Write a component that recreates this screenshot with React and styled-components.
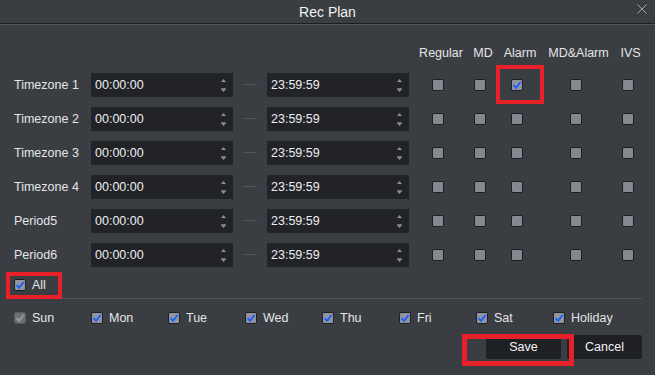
import React from 'react'
import styled, { createGlobalStyle } from 'styled-components'

const GlobalStyle = createGlobalStyle`
  html, body {
    margin: 0;
    padding: 0;
    background: #3a3d42;
  }
  body {
    font-family: 'Liberation Sans', Arial, sans-serif;
    color: #e4e5e7;
  }
`

const zones = ['Timezone 1', 'Timezone 2', 'Timezone 3', 'Timezone 4', 'Period5', 'Period6']
const kinds = ['Regular', 'MD', 'Alarm', 'MD&Alarm', 'IVS']
const days = ['Sun', 'Mon', 'Tue', 'Wed', 'Thu', 'Fri', 'Sat', 'Holiday']

function Check({ checked, disabled }) {
  return (
    <Box checked={checked} disabled={disabled}>
      {checked && (
        <svg width="10" height="10" viewBox="0 0 10 10">
          <path d="M1.6 5.2 L4 7.8 L8.6 2" fill="none" stroke={disabled ? '#9a9ca1' : '#1a5cff'} strokeWidth="1.8" />
        </svg>
      )}
    </Box>
  )
}

function Spinner() {
  return (
    <Arrows width="7" height="24" viewBox="0 0 7 24">
      <path d="M1 9 L3.5 6 L6 9 Z" fill="#8d9096" />
      <path d="M1 16 L3.5 19 L6 16 Z" fill="#8d9096" />
      <path d="M1 15.5 H6" stroke="#6b6e73" strokeWidth="1" />
    </Arrows>
  )
}

function RecPlan() {
  return (
    <Dialog>
      <TitleBar>
        <span />
        <Title>Rec Plan</Title>
        <Close>
          <svg width="10" height="10" viewBox="0 0 10 10">
            <path d="M0.5 0.5 L9.5 9.5 M9.5 0.5 L0.5 9.5" stroke="#a3a6ab" strokeWidth="1" />
          </svg>
        </Close>
      </TitleBar>
      <Body>
        <Table>
          <span />
          <span />
          <span />
          <span />
          {kinds.map((k) => (
            <Head key={k}>{k}</Head>
          ))}
          {zones.map((z, i) => (
            <React.Fragment key={z}>
              <Label>{z}</Label>
              <TimeField>
                00:00:00
                <Spinner />
              </TimeField>
              <Dash />
              <TimeField>
                23:59:59
                <Spinner />
              </TimeField>
              {kinds.map((k) => (
                <Cell key={k}>
                  {i === 0 && k === 'Alarm' ? (
                    <Marked>
                      <Check checked />
                      <Highlight l={-15} r={-21} t={-14} b={-13} w={4} />
                    </Marked>
                  ) : (
                    <Check />
                  )}
                </Cell>
              ))}
            </React.Fragment>
          ))}
        </Table>
        <AllRow>
          <Marked>
            <Option>
              <Check checked />
              All
            </Option>
            <Highlight l={-8} r={-16} t={-6} b={-7} w={4} />
          </Marked>
        </AllRow>
        <Divider />
        <Days>
          {days.map((d, i) => (
            <Option key={d}>
              <Check checked disabled={i === 0} />
              {d}
            </Option>
          ))}
        </Days>
        <Actions>
          <Marked>
            <Button>Save</Button>
            <Highlight l={-24} r={-13} t={-1} b={-7} w={5} />
          </Marked>
          <Button>Cancel</Button>
        </Actions>
      </Body>
    </Dialog>
  )
}

export default function App() {
  return (
    <>
      <GlobalStyle />
      <RecPlan />
    </>
  )
}

const Dialog = styled.div`
  width: 655px;
  height: 375px;
  background: #3a3d42;
  overflow: hidden;
`

const TitleBar = styled.div`
  height: 23px;
  display: grid;
  grid-template-columns: 1fr auto 1fr;
  align-items: center;
  background: #3a3d42;
  border-bottom: 1px solid #1c1e21;
  box-shadow: 0 1px 0 #52565c;
`

const Title = styled.div`
  font-size: 14px;
  color: #f2f3f4;
  padding-top: 1px;
`

const Close = styled.div`
  justify-self: end;
  display: flex;
  padding: 0 8px 6px 0;
`

const Body = styled.div`
  padding: 19px 13px 0 14px;
`

const Table = styled.div`
  display: grid;
  grid-template-columns: 67px 142px 14px 142px 44px 20px 34px 63px 21px;
  grid-template-rows: 20px repeat(6, 24px);
  column-gap: 10px;
  row-gap: 10px;
  align-items: center;
`

const Head = styled.div`
  font-size: 12.5px;
  white-space: nowrap;
  text-align: center;
`

const Label = styled.div`
  font-size: 12.5px;
  white-space: nowrap;
`

const TimeField = styled.div`
  height: 24px;
  background: #222327;
  display: flex;
  align-items: center;
  justify-content: space-between;
  padding: 0 6px 0 4px;
  font-size: 12.5px;
  color: #eceef0;
`

const Arrows = styled.svg`
  display: block;
`

const Dash = styled.div`
  height: 1px;
  background: #54585e;
  margin-top: -2px;
`

const Cell = styled.div`
  display: flex;
  justify-content: center;
  padding-right: 6px;
`

const Box = styled.span`
  width: 12px;
  height: 12px;
  box-sizing: border-box;
  border: 1px solid ${(p) => (p.disabled ? '#56595e' : '#1d1f23')};
  border-radius: 2px;
  background: ${(p) => (p.disabled ? '#6c6f75' : p.checked ? '#8f94a0' : '#85888f')};
  display: inline-flex;
  align-items: center;
  justify-content: center;
  flex: none;
`

const Marked = styled.div`
  position: relative;
  display: inline-flex;
`

const Highlight = styled.span`
  position: absolute;
  left: ${(p) => p.l}px;
  right: ${(p) => p.r}px;
  top: ${(p) => p.t}px;
  bottom: ${(p) => p.b}px;
  border: ${(p) => p.w}px solid #e8202a;
  pointer-events: none;
`

const AllRow = styled.div`
  height: 24px;
  margin-top: 6px;
  display: flex;
  align-items: center;
`

const Option = styled.label`
  display: flex;
  align-items: center;
  gap: 6px;
  font-size: 12.5px;
  line-height: 14px;
  white-space: nowrap;
`

const Divider = styled.div`
  height: 1px;
  margin-top: 1px;
  background: #4e5359;
`

const Days = styled.div`
  display: grid;
  grid-template-columns: repeat(8, 77px);
  height: 24px;
  margin-top: 7px;
  align-items: center;
`

const Actions = styled.div`
  display: flex;
  justify-content: flex-end;
  gap: 6px;
  margin-top: 5px;
`

const Button = styled.button`
  width: 75px;
  height: 24px;
  border: none;
  border-radius: 2px;
  background: #1e2024;
  color: #f2f3f4;
  font-family: 'Liberation Sans', Arial, sans-serif;
  font-size: 12.5px;
  padding: 0;
`
